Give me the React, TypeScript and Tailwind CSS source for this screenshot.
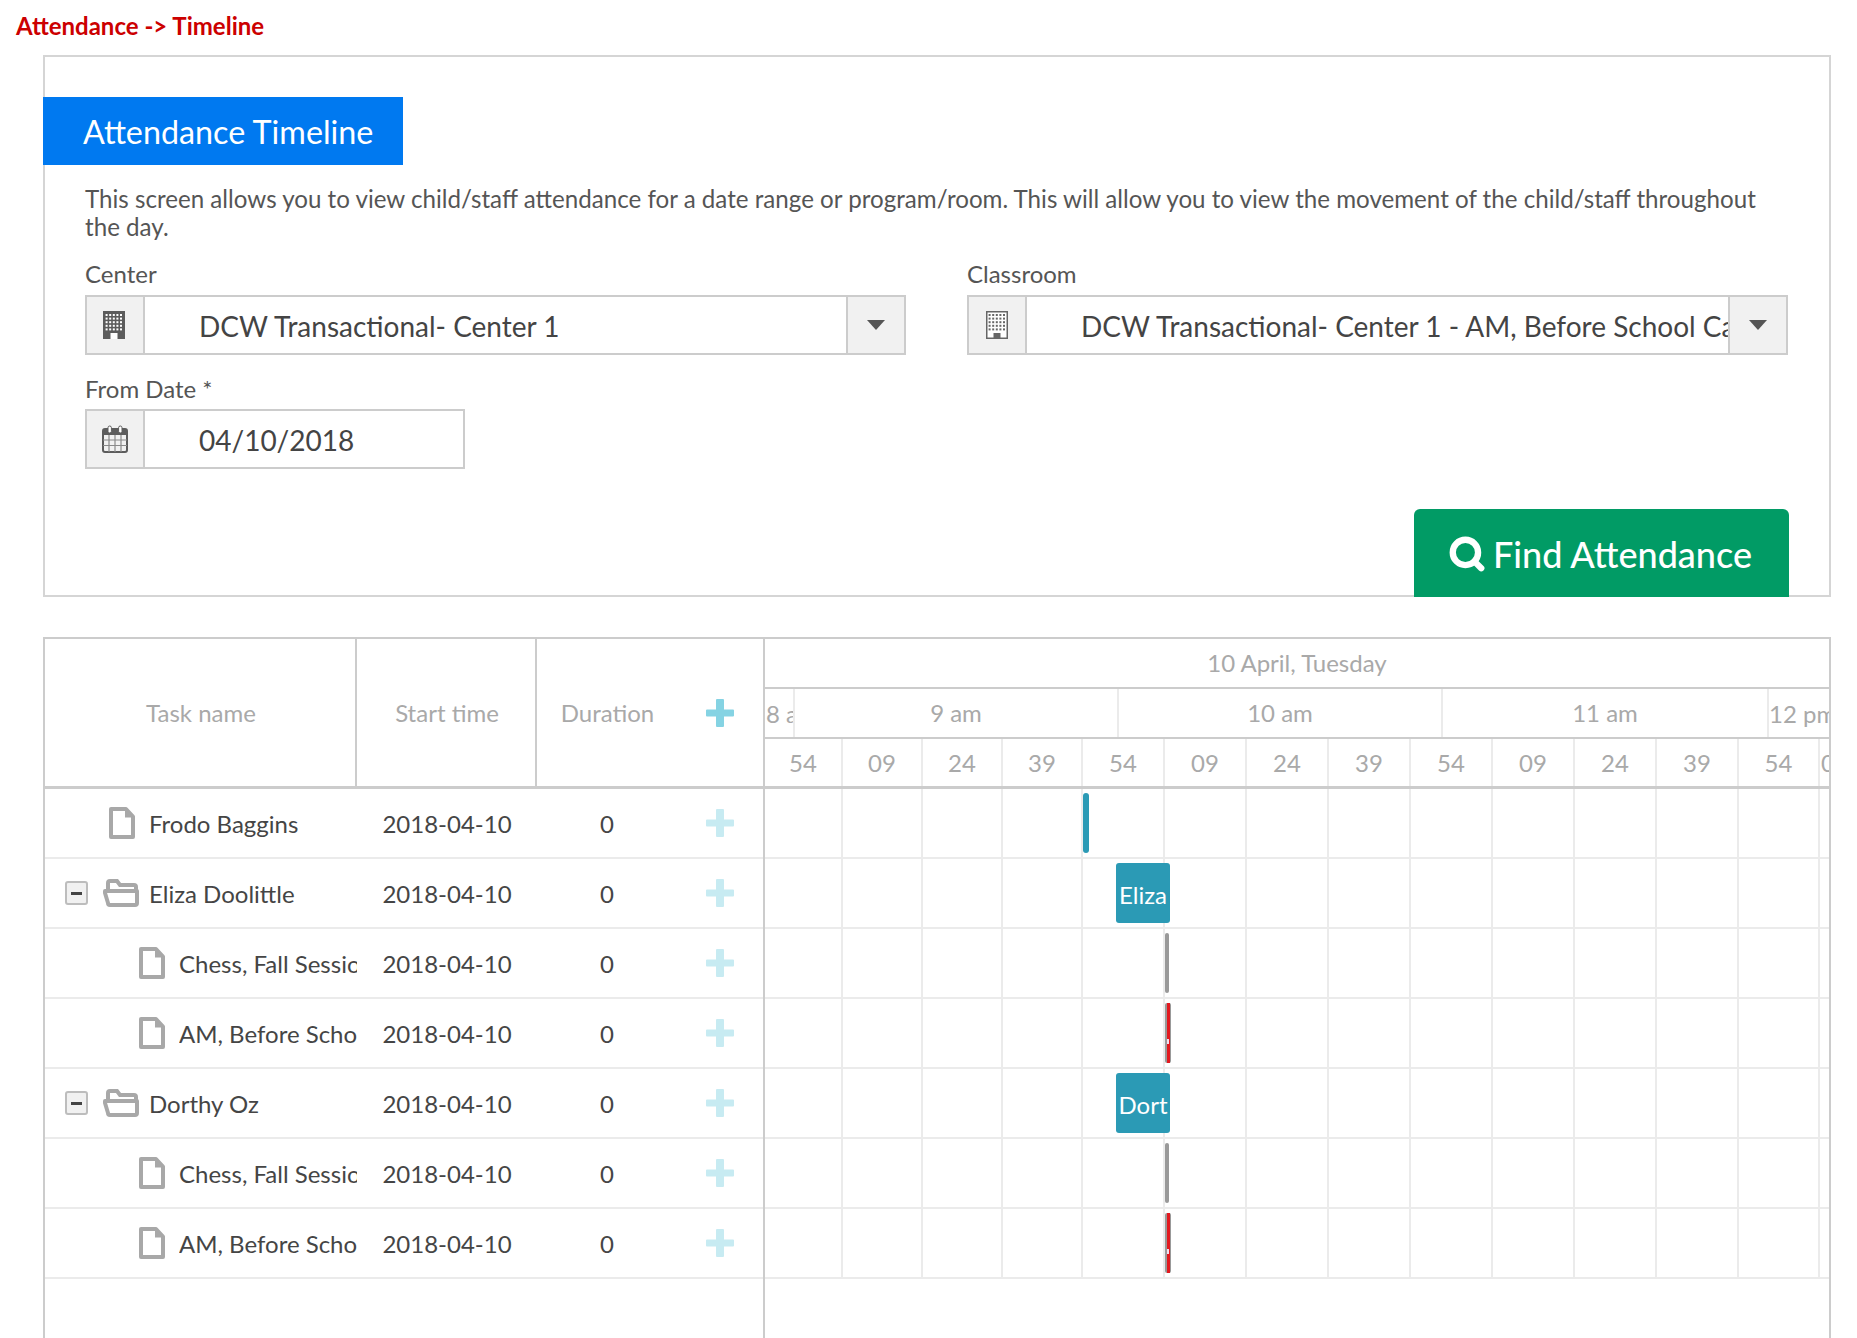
import React from "react";
import { Search } from "lucide-react";

const FONT = "font-['Lato','Carlito','Open_Sans',sans-serif]";

function Building({ light }: { light?: boolean }) {
  const holes = [];
  for (let r = 0; r < 5; r++) for (let c = 0; c < 5; c++) holes.push(<rect key={`${r}-${c}`} x={2.6 + c * 3.6} y={3 + r * 3.6} width="2" height="2" fill={light ? "#666" : "#fff"} />);
  return (
    <svg width="22" height="28" viewBox="0 0 22 28" className={light ? "ml-[2px]" : ""}>
      {light ? <rect x="0.75" y="0.75" width="20.5" height="26.5" fill="#fff" stroke="#666" strokeWidth="1.5" /> : <rect width="22" height="28" fill="#5c5c5c" />}
      {holes}
      <rect x="7.5" y="22" width="7" height="6" fill={light ? "#666" : "#fff"} />
    </svg>
  );
}

function CalendarIcon() {
  return (
    <svg width="26" height="28" viewBox="0 0 26 28" className="ml-[2px]">
      <rect x="1" y="4" width="24" height="23" rx="2" fill="none" stroke="#5c5c5c" strokeWidth="2" />
      <rect x="1" y="4" width="24" height="6" fill="#5c5c5c" />
      <path d="M1 15H25M1 20.5H25M7 10V27M13 10V27M19 10V27" stroke="#8a8a8a" strokeWidth="1.2" />
      <rect x="6" y="1" width="3.4" height="7" rx="1.7" fill="#fff" stroke="#5c5c5c" strokeWidth="1" />
      <rect x="16.6" y="1" width="3.4" height="7" rx="1.7" fill="#fff" stroke="#5c5c5c" strokeWidth="1" />
    </svg>
  );
}

function Field({ icon, value, width, caret }: { icon: React.ReactNode; value: string; width: string; caret?: boolean }) {
  return (
    <div className={`flex h-[60px] border-2 border-[#cccccc] ${width}`}>
      <div className="flex w-[58px] shrink-0 items-center justify-center border-r-2 border-[#cccccc] bg-[#f1f1f1] pr-[2px]">{icon}</div>
      <div className="min-w-0 flex-1 overflow-hidden whitespace-nowrap pl-[54px] text-[28px] leading-[58px] text-[#444444]">{value}</div>
      {caret && (
        <div className="flex w-[58px] shrink-0 items-center justify-center border-l-2 border-[#cccccc] bg-[#f1f1f1]">
          <div className="h-0 w-0 border-x-[9px] border-t-[10px] border-x-transparent border-t-[#555555]" />
        </div>
      )}
    </div>
  );
}

function Plus({ light }: { light?: boolean }) {
  return (
    <svg width="28" height="28" viewBox="0 0 28 28" className={light ? "opacity-45" : ""}>
      <path d="M10 1a1 1 0 0 1 1-1h6a1 1 0 0 1 1 1v9.500h9a1 1 0 0 1 1 1v5a1 1 0 0 1-1 1h-9V27a1 1 0 0 1-1 1h-6a1 1 0 0 1-1-1v-9.500H1a1 1 0 0 1-1-1v-5a1 1 0 0 1 1-1h9z" fill="#85d3e3" />
    </svg>
  );
}

function FileIcon() {
  return (
    <svg width="26" height="32" viewBox="0 0 26 32">
      <path d="M2 2H17L24 9.500V30H2Z" fill="#fff" stroke="#a8a8a8" strokeWidth="4" strokeLinejoin="round" />
      <path d="M16 1.500V10.500H24.500Z" fill="#a8a8a8" />
    </svg>
  );
}

function FolderIcon() {
  return (
    <svg width="36" height="28" viewBox="0 0 36 28">
      <path d="M5 11V4a2 2 0 0 1 2-2h7l3 4h14a2 2 0 0 1 2 2v3" fill="none" stroke="#a8a8a8" strokeWidth="4" />
      <path d="M2 12H34V24a2 2 0 0 1-2 2H7a2 2 0 0 1-2-2L2 14Z" fill="#fff" stroke="#a8a8a8" strokeWidth="4" strokeLinejoin="round" />
    </svg>
  );
}

function Toggle() {
  return (
    <div className="flex h-[24px] w-[23px] items-center justify-center rounded-[3px] border-2 border-[#bdbdbd] bg-[#f1f1f1]">
      <div className="h-[3px] w-[11px] bg-[#444444]" />
    </div>
  );
}

type Row = { name: string; kind: "file" | "folder" | "child" };
const rows: Row[] = [
  { name: "Frodo Baggins", kind: "file" },
  { name: "Eliza Doolittle", kind: "folder" },
  { name: "Chess, Fall Session", kind: "child" },
  { name: "AM, Before School Care", kind: "child" },
  { name: "Dorthy Oz", kind: "folder" },
  { name: "Chess, Fall Session", kind: "child" },
  { name: "AM, Before School Care", kind: "child" },
];

const minutes: [string, string][] = [
  ["54", "w-[78px]"], ["09", "w-[80px]"], ["24", "w-[80px]"], ["39", "w-[80px]"], ["54", "w-[82px]"], ["09", "w-[82px]"], ["24", "w-[82px]"],
  ["39", "w-[82px]"], ["54", "w-[82px]"], ["09", "w-[82px]"], ["24", "w-[82px]"], ["39", "w-[82px]"], ["54", "w-[81px]"], ["09", "w-[11px]"],
];

function Bar({ kind }: { kind: "blue" | "eliza" | "dort" | "gray" | "red" }) {
  if (kind === "blue") return <div className="absolute left-[318px] top-[4px] h-[60px] w-[6px] rounded-[3px] bg-[#2b9ab5]" />;
  if (kind === "eliza" || kind === "dort")
    return <div className="absolute left-[351px] top-[4px] flex h-[60px] w-[54px] items-center justify-center overflow-hidden whitespace-nowrap rounded-[3px] bg-[#2b9ab5] pt-[3px] text-[24px] text-white">{kind === "eliza" ? "Eliza" : "Dort"}</div>;
  if (kind === "gray") return <div className="absolute left-[400px] top-[4px] h-[60px] w-[4px] rounded-[2px] bg-[#999999]" />;
  return (
    <div className="absolute left-[400px] top-[4px] flex h-[60px] w-[6px] justify-center rounded-[2px] bg-[#999999]">
      <div className="relative h-full w-[3px] bg-[#e3191f]">
        <div className="absolute left-0 top-[36px] h-[5px] w-[2px] bg-[#f3dff0]" />
      </div>
    </div>
  );
}

const bars: ("blue" | "eliza" | "dort" | "gray" | "red")[] = ["blue", "eliza", "gray", "red", "dort", "gray", "red"];

export default function App() {
  return (
    <div className={`${FONT} h-[1338px] w-[1857px] overflow-hidden bg-white`}>
      <div className="pl-4 pt-[11px] text-[24px] font-bold leading-[30px] text-[#cc0000]">{"Attendance -> Timeline"}</div>

      <section className="relative ml-[43px] mt-[14px] h-[542px] w-[1788px] border-2 border-[#d5d5d5]">
        <div className="-ml-[2px] mt-[40px] flex h-[68px] w-[360px] items-center bg-[#0079f0] pl-[40px] pt-[2px] text-[32.300px] text-white">Attendance Timeline</div>
        <p className="mt-[20px] pl-[40px] pr-[60px] text-[24.150px] leading-[28px] text-[#555555]">
          This screen allows you to view child/staff attendance for a date range or program/room. This will allow you to view the movement of the child/staff throughout the day.
        </p>
        <div className="mt-[12px] flex gap-[61px] pl-[40px]">
          <div>
            <div className="h-[42px] text-[24px] leading-[42px] text-[#555555]">Center</div>
            <Field icon={<Building />} value="DCW Transactional- Center 1" width="w-[821px]" caret />
          </div>
          <div>
            <div className="h-[42px] text-[24px] leading-[42px] text-[#555555]">Classroom</div>
            <Field icon={<Building light />} value="DCW Transactional- Center 1 - AM, Before School Care" width="w-[821px]" caret />
          </div>
        </div>
        <div className="mt-[14px] pl-[40px]">
          <div className="h-[40px] text-[24px] leading-[40px] text-[#555555]">From Date *</div>
          <Field icon={<CalendarIcon />} value="04/10/2018" width="w-[380px]" />
        </div>
        <button className="absolute bottom-[-2px] left-[1369px] flex h-[88px] w-[375px] items-center justify-center gap-[7px] rounded-t-[6px] bg-[#019b65] pr-[3px] pt-[1px] text-[36px] font-medium text-white">
          <Search size={38} strokeWidth={4} />
          Find Attendance
        </button>
      </section>

      <section className="ml-[43px] mt-[40px] flex h-[701px] w-[1788px] border-x-2 border-t-2 border-[#cccccc]">
        <div className="w-[720px] shrink-0 border-r-2 border-[#cccccc]">
          <div className="flex h-[150px] border-b-[3px] border-[#cccccc] text-[24px] text-[#a9a9a9]">
            <div className="flex w-[312px] items-center justify-center border-r-2 border-[#cccccc] pl-[2px]">Task name</div>
            <div className="flex w-[180px] items-center justify-center border-r-2 border-[#cccccc] pl-[2px]">Start time</div>
            <div className="flex w-[141px] items-center justify-center">Duration</div>
            <div className="flex flex-1 items-center justify-center pr-[1px]"><Plus /></div>
          </div>
          {rows.map((r, i) => (
            <div key={i} className="flex h-[70px] items-center border-b-2 border-[#ebebeb] text-[24px] text-[#454545]">
              <div className="flex h-full w-[312px] shrink-0 items-center overflow-hidden whitespace-nowrap">
                {r.kind === "folder" && <div className="ml-[20px] shrink-0"><Toggle /></div>}
                <div className={`flex w-[36px] shrink-0 justify-center ${r.kind === "folder" ? "ml-[15px]" : r.kind === "file" ? "ml-[59px]" : "ml-[89px]"}`}>
                  {r.kind === "folder" ? <FolderIcon /> : <FileIcon />}
                </div>
                <span className={`min-w-0 flex-1 overflow-hidden pt-[2px] ${r.kind === "folder" ? "ml-[10px]" : "ml-[9px]"}`}>{r.name}</span>
              </div>
              <div className="w-[180px] pt-[2px] text-center">2018-04-10</div>
              <div className="w-[141px] pr-[1px] pt-[2px] text-center">0</div>
              <div className="flex flex-1 justify-center pr-[1px]"><Plus light /></div>
            </div>
          ))}
        </div>

        <div className="min-w-0 flex-1 overflow-hidden">
          <div className="flex h-[50px] items-center justify-center border-b-2 border-[#cccccc] text-[24px] text-[#a9a9a9]">10 April, Tuesday</div>
          <div className="flex h-[50px] border-b-2 border-[#cccccc] text-[24px] text-[#a9a9a9]">
            <div className="w-[30px] shrink-0 overflow-hidden whitespace-nowrap border-r-2 border-[#ebebeb] pl-[1px] leading-[50px]">8 am</div>
            <div className="flex w-[324px] shrink-0 items-center justify-center border-r-2 border-[#ebebeb]">9 am</div>
            <div className="flex w-[324px] shrink-0 items-center justify-center border-r-2 border-[#ebebeb]">10 am</div>
            <div className="flex w-[326px] shrink-0 items-center justify-center border-r-2 border-[#ebebeb]">11 am</div>
            <div className="w-[60px] shrink-0 overflow-hidden whitespace-nowrap leading-[50px]">12 pm</div>
          </div>
          <div className="flex h-[50px] border-b-[3px] border-[#cccccc] text-[24px] text-[#a9a9a9]">
            {minutes.map(([t, w], i) => (
              <div key={i} className={`${w} shrink-0 overflow-hidden border-r-2 border-[#ebebeb] text-center leading-[47px] last:border-r-0 ${i === 13 ? "text-left pl-[1px]" : ""}`}>{t}</div>
            ))}
          </div>
          {bars.map((b, i) => (
            <div key={i} className="relative flex h-[70px] border-b-2 border-[#ebebeb]">
              {minutes.map(([t, w], j) => (
                <div key={j} className={`${w} shrink-0 border-r-2 border-[#ebebeb] last:border-r-0`} />
              ))}
              <Bar kind={b} />
            </div>
          ))}
        </div>
      </section>
    </div>
  );
}
